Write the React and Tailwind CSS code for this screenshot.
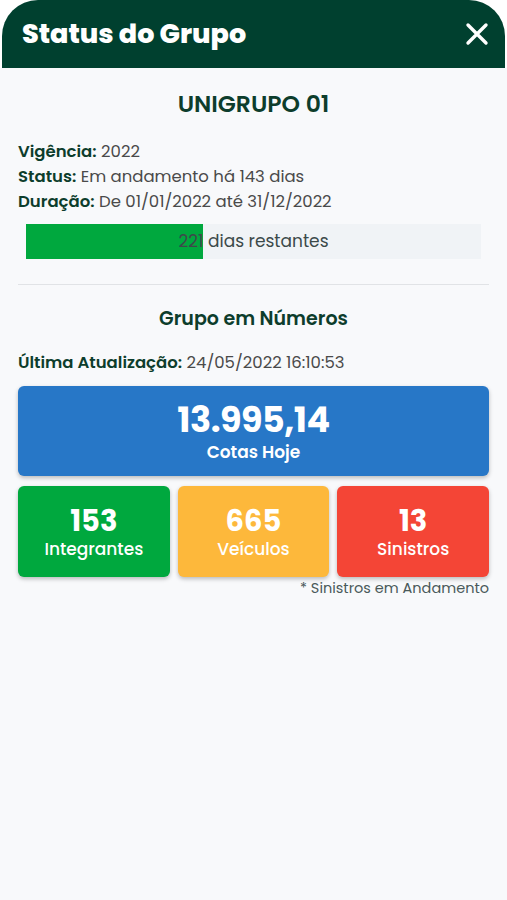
import React from "react";

const font = { fontFamily: "Poppins, Inter, 'Noto Sans', sans-serif" };

const StatCard = ({ value, label, color }) => (
  <div className={`flex h-[91px] flex-col items-center justify-center rounded-md pt-[2px] shadow-[0_2px_4px_rgba(0,0,0,0.25)] ${color}`}>
    <span className="text-[29px] font-bold leading-[30px] text-white">{value}</span>
    <span className="mt-[2px] text-[17px] font-medium leading-[22px] text-white">{label}</span>
  </div>
);

export default function App() {
  return (
    <div className="min-h-[900px] bg-[#f8f9fb]" style={font}>
      <div className="bg-white">
        <div className="mx-[2px] flex h-[68px] items-center justify-between rounded-t-[36px] bg-[#00402f] pl-[20px] pr-[16px]">
          <h1 className="text-[27px] font-extrabold text-white">Status do Grupo</h1>
          <svg width="24" height="24" viewBox="0 0 24 24" fill="none" stroke="white" strokeWidth="3.4" strokeLinecap="round">
            <path d="M3 3L21 21M21 3L3 21" />
          </svg>
        </div>
      </div>
      <div className="px-[18px] pt-[21px]">
        <h2 className="text-center text-[23.5px] font-semibold leading-[30px] text-[#0d3d2c]">UNIGRUPO 01</h2>

        <div className="mt-[20px] flex flex-col text-[16.5px] leading-[25px] text-[#4a4a4a]">
          <p><b className="font-semibold text-[#0d3d2c]">Vigência:</b> 2022</p>
          <p><b className="font-semibold text-[#0d3d2c]">Status:</b> Em andamento há 143 dias</p>
          <p><b className="font-semibold text-[#0d3d2c]">Duração:</b> De 01/01/2022 até 31/12/2022</p>
        </div>

        <div className="relative mx-[8px] mt-[10px] h-[35px] bg-[#f0f3f6]">
          <div className="h-full w-[39%] bg-[#00a83e]" />
          <span className="absolute inset-0 flex items-center justify-center text-[17px] text-[#3c4a4a]">221 dias restantes</span>
        </div>

        <div className="mt-[25px] border-t border-[#e1e3e6]" />

        <h3 className="mt-[21px] text-center text-[19px] font-semibold leading-[26px] text-[#0d3d2c]">Grupo em Números</h3>

        <p className="mt-[18px] text-[16.5px] leading-[26px] text-[#4a4a4a]">
          <b className="font-semibold text-[#0d3d2c]">Última Atualização:</b> 24/05/2022 16:10:53
        </p>

        <div className="mt-[10px] flex h-[90px] flex-col items-center justify-center rounded-md bg-[#2777c7] pt-[2px] shadow-[0_2px_4px_rgba(0,0,0,0.25)]">
          <span className="text-[35px] font-bold leading-[38px] tracking-[-0.5px] text-white">13.995,14</span>
          <span className="mt-[2px] text-[17px] font-semibold leading-[22px] text-white">Cotas Hoje</span>
        </div>

        <div className="mt-[10px] grid grid-cols-3 gap-[8px]">
          <StatCard value="153" label="Integrantes" color="bg-[#00a83e]" />
          <StatCard value="665" label="Veículos" color="bg-[#fdb83b]" />
          <StatCard value="13" label="Sinistros" color="bg-[#f44536]" />
        </div>

        <p className="mt-[1px] text-right text-[14.5px] leading-[20px] text-[#4a5a5a]">* Sinistros em Andamento</p>
      </div>
    </div>
  );
}
